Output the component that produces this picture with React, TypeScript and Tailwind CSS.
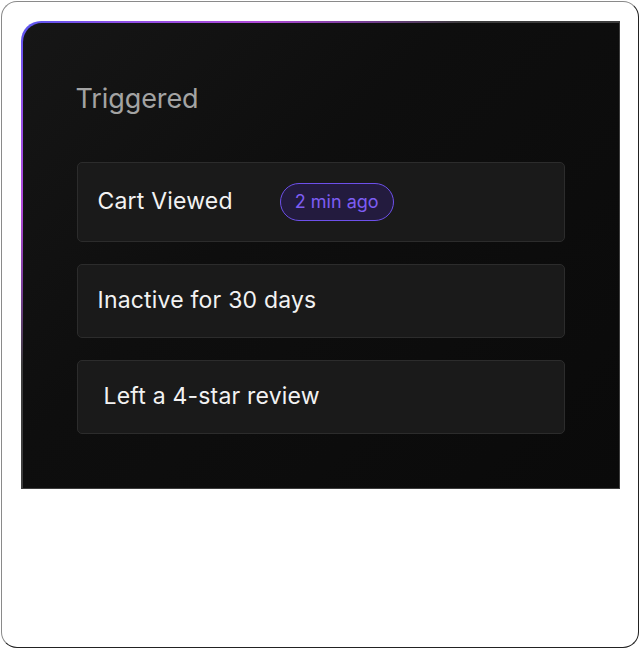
import { ReactElement } from "react";

type Trigger = {
  label: string;
  badge?: string;
  indent?: boolean;
};

const triggers: Trigger[] = [
  { label: "Cart Viewed", badge: "2 min ago" },
  { label: "Inactive for 30 days" },
  { label: "Left a 4-star review", indent: true },
];

const TriggerRow = ({ trigger }: { trigger: Trigger }): ReactElement => {
  return (
    <div
      className={`flex items-center rounded-[5px] border border-[#2c2c2c] bg-[#1a1a1a] pr-5 ${
        trigger.badge ? "h-[80px]" : "h-[74px]"
      } ${trigger.indent ? "pl-[26px]" : "pl-5"}`}
    >
      <span className="text-[23px] leading-none tracking-[0.2px] text-[#f2f2f2]">{trigger.label}</span>
      {trigger.badge && (
        <span className="ml-[47px] flex h-[38px] items-center rounded-full border-[1.5px] border-[#6d50ea] bg-[#231b3e] px-[14px] text-[18px] leading-none text-[#7d5df3]">
          {trigger.badge}
        </span>
      )}
    </div>
  );
};

const App = (): ReactElement => {
  return (
    <div
      className="h-[649px] w-[640px] bg-white p-px"
      style={{ fontFamily: "Inter, 'Noto Sans', sans-serif" }}
    >
      {/* Frame */}
      <div className="h-[647px] w-[638px] rounded-[16px] border border-t-[#8a8a8a] border-l-[#8a8a8a] border-r-[#222] border-b-[#222] pl-[19px] pt-[19px]">
        {/* Panel with gradient edge */}
        <div className="h-[468px] w-[599px] rounded-tl-[20px] bg-[#3d3d3d] bg-[radial-gradient(at_top_left,#5a56f0_0%,#8f50e8_12%,#b04ad8_28%,#7a3f9a_40%,#3d3d3d_52%)] p-[1.5px]">
          <div className="h-full w-full rounded-tl-[19px] bg-[#0b0b0b] bg-[linear-gradient(135deg,#161616_0%,#0e0e0e_40%,#0a0a0a_100%)] pl-[54px] pr-[54px] pt-[62px]">
            <h2 className="-ml-px text-[27px] leading-none tracking-[-0.1px] text-[#a3a3a3]">Triggered</h2>
            <div className="mt-[50px] flex flex-col gap-[22px]">
              {triggers.map((trigger) => (
                <TriggerRow key={trigger.label} trigger={trigger} />
              ))}
            </div>
          </div>
        </div>
      </div>
    </div>
  );
};

export default App;
